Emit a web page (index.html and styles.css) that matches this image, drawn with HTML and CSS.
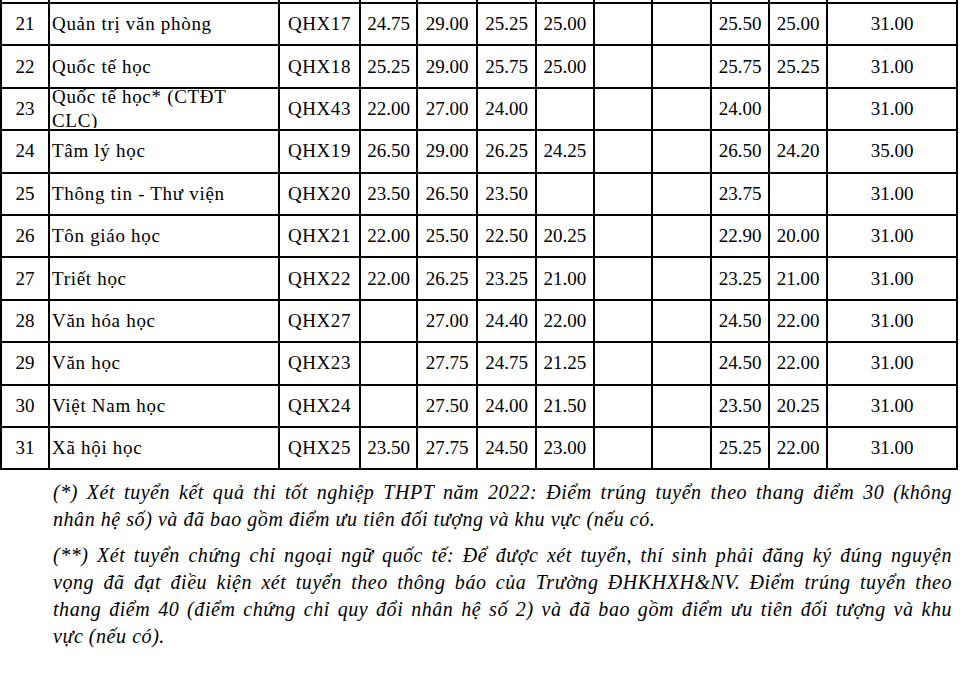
FILE: index.html
```html
<!DOCTYPE html>
<html lang="vi">
<head>
<meta charset="utf-8">
<title>Điểm trúng tuyển</title>
<link rel="stylesheet" href="styles.css">
</head>
<body>
<table class="scores">
  <colgroup>
    <col class="c-no"><col class="c-name"><col class="c-code">
    <col class="c-n1"><col class="c-n2"><col class="c-n3"><col class="c-n4">
    <col class="c-n5"><col class="c-n6"><col class="c-n7"><col class="c-n8">
    <col class="c-last">
  </colgroup>
  <tbody>
    <tr class="cut"><td></td><td></td><td></td><td></td><td></td><td></td><td></td><td></td><td></td><td></td><td></td><td></td></tr>
    <tr><td>21</td><td class="name">Quản trị văn phòng</td><td class="code">QHX17</td><td>24.75</td><td>29.00</td><td>25.25</td><td>25.00</td><td></td><td></td><td>25.50</td><td>25.00</td><td>31.00</td></tr>
    <tr><td>22</td><td class="name">Quốc tế học</td><td class="code">QHX18</td><td>25.25</td><td>29.00</td><td>25.75</td><td>25.00</td><td></td><td></td><td>25.75</td><td>25.25</td><td>31.00</td></tr>
    <tr><td>23</td><td class="name wrap"><div class="clip"><span>Quốc tế học* (CTĐT CLC)</span></div></td><td class="code">QHX43</td><td>22.00</td><td>27.00</td><td>24.00</td><td></td><td></td><td></td><td>24.00</td><td></td><td>31.00</td></tr>
    <tr><td>24</td><td class="name">Tâm lý học</td><td class="code">QHX19</td><td>26.50</td><td>29.00</td><td>26.25</td><td>24.25</td><td></td><td></td><td>26.50</td><td>24.20</td><td>35.00</td></tr>
    <tr><td>25</td><td class="name">Thông tin - Thư viện</td><td class="code">QHX20</td><td>23.50</td><td>26.50</td><td>23.50</td><td></td><td></td><td></td><td>23.75</td><td></td><td>31.00</td></tr>
    <tr><td>26</td><td class="name">Tôn giáo học</td><td class="code">QHX21</td><td>22.00</td><td>25.50</td><td>22.50</td><td>20.25</td><td></td><td></td><td>22.90</td><td>20.00</td><td>31.00</td></tr>
    <tr><td>27</td><td class="name">Triết học</td><td class="code">QHX22</td><td>22.00</td><td>26.25</td><td>23.25</td><td>21.00</td><td></td><td></td><td>23.25</td><td>21.00</td><td>31.00</td></tr>
    <tr><td>28</td><td class="name">Văn hóa học</td><td class="code">QHX27</td><td></td><td>27.00</td><td>24.40</td><td>22.00</td><td></td><td></td><td>24.50</td><td>22.00</td><td>31.00</td></tr>
    <tr><td>29</td><td class="name">Văn học</td><td class="code">QHX23</td><td></td><td>27.75</td><td>24.75</td><td>21.25</td><td></td><td></td><td>24.50</td><td>22.00</td><td>31.00</td></tr>
    <tr><td>30</td><td class="name">Việt Nam học</td><td class="code">QHX24</td><td></td><td>27.50</td><td>24.00</td><td>21.50</td><td></td><td></td><td>23.50</td><td>20.25</td><td>31.00</td></tr>
    <tr><td>31</td><td class="name">Xã hội học</td><td class="code">QHX25</td><td>23.50</td><td>27.75</td><td>24.50</td><td>23.00</td><td></td><td></td><td>25.25</td><td>22.00</td><td>31.00</td></tr>
  </tbody>
</table>
<div class="notes">
  <p><span class="ln">(*) Xét tuyển kết quả thi tốt nghiệp THPT năm 2022: Điểm trúng tuyển theo thang điểm 30 (không</span><span class="ln last">nhân hệ số) và đã bao gồm điểm ưu tiên đối tượng và khu vực (nếu có.</span></p>
  <p><span class="ln">(**) Xét tuyển chứng chỉ ngoại ngữ quốc tế: Để được xét tuyển, thí sinh phải đăng ký đúng nguyện</span><span class="ln">vọng đã đạt điều kiện xét tuyển theo thông báo của Trường ĐHKHXH&amp;NV. Điểm trúng tuyển theo</span><span class="ln">thang điểm 40 (điểm chứng chỉ quy đổi nhân hệ số 2) và đã bao gồm điểm ưu tiên đối tượng và khu</span><span class="ln last">vực (nếu có).</span></p>
</div>
</body>
</html>
```
FILE: styles.css
```css
html, body {
  margin: 0;
  padding: 0;
  background: #fff;
  color: #000;
  font-family: "Liberation Serif", "Times New Roman", serif;
}

.scores {
  border-collapse: collapse;
  table-layout: fixed;
  width: 958px;
}

.c-no { width: 48px; }
.c-name { width: 230px; }
.c-code { width: 81px; }
.c-n1 { width: 57px; }
.c-n2 { width: 60px; }
.c-n3 { width: 59px; }
.c-n4 { width: 57.5px; }
.c-n5 { width: 58.5px; }
.c-n6 { width: 59px; }
.c-n7 { width: 58px; }
.c-n8 { width: 58px; }
.c-last { width: 130px; }

.scores td {
  border: 2px solid #000;
  padding: 0;
  font-size: 19px;
  text-align: center;
  vertical-align: middle;
  white-space: nowrap;
  overflow: hidden;
}

.scores tr {
  height: 42.4px;
}

.scores tr.cut {
  height: 3px;
}

.scores tr.cut td {
  border-top: 0;
  height: 2px;
  line-height: 0;
  font-size: 0;
}

.scores td.name {
  text-align: left;
  padding-left: 2px;
  letter-spacing: 0.7px;
}

.scores td.code {
  letter-spacing: 0.6px;
}

.scores td.wrap {
  white-space: normal;
}

.clip {
  height: 39px;
  overflow: hidden;
  display: flex;
  align-items: center;
}

.clip span {
  display: block;
  max-width: 200px;
  line-height: 24px;
}

.notes {
  margin: 9px 8px 0 53px;
  font-style: italic;
  font-size: 20px;
  letter-spacing: 0.55px;
  line-height: 27px;
}

.notes p {
  margin: 0 0 9px;
}

.notes .ln {
  display: block;
  text-align: justify;
  text-align-last: justify;
}

.notes .ln.last {
  text-align-last: left;
}
```
